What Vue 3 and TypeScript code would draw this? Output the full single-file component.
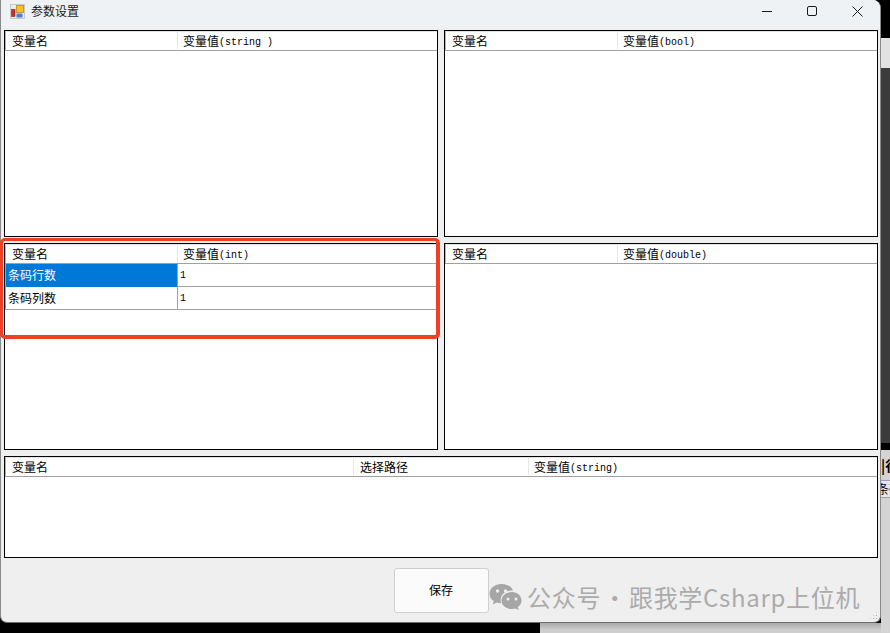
<script setup lang="ts">
interface Column {
  label: string
  suffix?: string
  width: string
}

interface Panel {
  key: string
  columns: Column[]
  rows: string[][]
  wide?: boolean
}

const name: Column = { label: '变量名', width: '172px' }
const value = (suffix: string): Column => ({ label: '变量值', suffix, width: '1fr' })

const panels: Panel[] = [
  { key: 'string', columns: [name, value('(string )')], rows: [] },
  { key: 'bool', columns: [name, value('(bool)')], rows: [] },
  { key: 'int', columns: [name, value('(int)')], rows: [['条码行数', '1'], ['条码列数', '1']] },
  { key: 'double', columns: [name, value('(double)')], rows: [] },
  {
    key: 'path',
    wide: true,
    columns: [
      { label: '变量名', width: '348px' },
      { label: '选择路径', width: '175px' },
      value('(string)')
    ],
    rows: []
  }
]

const template = (p: Panel) => p.columns.map((c) => c.width).join(' ')
</script>

<template>
  <div class="screen">
    <div class="window">
      <header class="titlebar">
        <svg class="app-icon" width="15" height="15" viewBox="0 0 15 15">
          <rect x="0.5" y="0.5" width="14" height="14" fill="#ececec" stroke="#c8c8c8" />
          <rect x="6.5" y="1.500" width="7" height="7" fill="#f6c02c" stroke="#b98a1a" stroke-width="0.8" />
          <rect x="1.500" y="5.500" width="3.500" height="7" fill="#c8302a" stroke="#8c1f1b" stroke-width="0.6" />
          <rect x="6.500" y="9.500" width="6" height="4" fill="#3f82d8" />
        </svg>
        <span class="title">参数设置</span>
        <div class="controls">
          <svg class="ctl-min" width="10" height="10" viewBox="0 0 10 10">
            <path d="M0 5.5H10" stroke="#1a1a1a" fill="none" />
          </svg>
          <svg class="ctl-max" width="10" height="10" viewBox="0 0 10 10">
            <rect x="0.5" y="0.5" width="9" height="9" rx="1.5" stroke="#1a1a1a" fill="none" />
          </svg>
          <svg class="ctl-close" width="11" height="11" viewBox="0 0 11 11">
            <path d="M0.5 0.5L10.5 10.5M10.5 0.5L0.5 10.5" stroke="#1a1a1a" fill="none" />
          </svg>
        </div>
      </header>

      <main class="panels">
        <section v-for="p in panels" :key="p.key" class="panel" :class="{ wide: p.wide }">
          <div class="head" :style="{ gridTemplateColumns: template(p) }">
            <div v-for="c in p.columns" :key="c.label" class="head-cell">{{ c.label }}<span v-if="c.suffix" class="mono">{{ c.suffix }}</span></div>
          </div>
          <div v-for="(r, i) in p.rows" :key="i" class="row" :style="{ gridTemplateColumns: template(p) }">
            <div class="cell first" :class="{ selected: i === 0 }">{{ r[0] }}</div>
            <div class="cell value">{{ r[1] }}</div>
          </div>
        </section>
      </main>

      <footer class="footer">
        <button class="save" type="button">保存</button>
      </footer>

      <div class="grip"></div>
    </div>

    <aside class="side">
      <div class="s-black"></div>
      <div class="s-light"></div>
      <div class="s-dark"></div>
      <div class="s-black2"></div>
      <div class="s-gray">
        <div class="s-text big">|行</div>
        <div class="s-text small">条码</div>
      </div>
    </aside>
    <div class="bottom">
      <div class="b-black"></div>
      <div class="b-gray"></div>
    </div>

    <div class="highlight"></div>

    <div class="watermark">
      <svg width="33" height="27" viewBox="0 0 33 27">
        <path d="M12.5 1C5.9 1 .5 5.3 .5 10.7c0 3 1.7 5.6 4.3 7.4l-1.1 3.5 4-2.1c1.4.4 2.9.6 4.4.7-.3-1-.5-2-.5-3 0-5.4 5-9.7 11.2-9.700.4 0 .8 0 1.200.1C22.900 3.700 18.100 1 12.500 1z" fill="#a6a6a6" />
        <circle cx="8.500" cy="8" r="1.700" fill="#efefef" />
        <circle cx="16.500" cy="8" r="1.700" fill="#efefef" />
        <path d="M23 9C17 9 12.500 12.800 12.500 17.500S17 26 23 26c1.200 0 2.400-.2 3.500-.5l3.200 1.500-.9-2.900c2.500-1.600 3.700-4 3.700-6.600C32.500 12.800 28.500 9 23 9z" fill="#a6a6a6" />
        <circle cx="19" cy="16" r="1.500" fill="#efefef" />
        <circle cx="27" cy="16" r="1.500" fill="#efefef" />
      </svg>
      <span class="wm-text">公众号 · 跟我学Csharp上位机</span>
    </div>
  </div>
</template>

<style scoped>
.screen {
  position: relative;
  width: 890px;
  height: 633px;
  overflow: hidden;
  display: grid;
  grid-template-columns: 881px 9px;
  grid-template-rows: 623px 10px;
  font-family: "Noto Sans CJK SC", "Liberation Sans", sans-serif;
  font-size: 12px;
  color: #000;
  background: #000;
}

.window {
  position: relative;
  grid-column: 1;
  grid-row: 1;
  display: flex;
  flex-direction: column;
  background: #efefef;
  border-left: 1px solid #8a8a8a;
  border-right: 1px solid #8a8a8a;
  border-bottom: 1px solid #6d6d6d;
  border-radius: 0 8px 7px 7px;
  box-sizing: border-box;
  overflow: hidden;
}

.titlebar {
  display: flex;
  align-items: center;
  height: 27px;
  flex: none;
  background: #eef2f5;
  padding-left: 9px;
  box-sizing: border-box;
}

.app-icon {
  flex: none;
  margin-top: -4px;
}

.title {
  margin-left: 6px;
  margin-top: -6px;
  line-height: 16px;
  color: #1a1a1a;
}

.controls {
  margin-left: auto;
  display: flex;
  align-items: center;
  padding-right: 17px;
  margin-top: -5px;
}

.ctl-min,
.ctl-max {
  margin-right: 35px;
}

.panels {
  display: grid;
  grid-template-columns: 434px 434px;
  grid-template-rows: 207px 207px 102px;
  gap: 6px;
  padding: 3px 0 0 3px;
  flex: none;
}

.panel {
  background: #fff;
  border: 1px solid #000;
  box-sizing: border-box;
  overflow: hidden;
}

.panel.wide {
  grid-column: 1 / span 2;
}

.head {
  display: grid;
  height: 20px;
  border-left: 1px solid #b4b4b4;
  border-bottom: 1px solid #a0a0a0;
  border-top: 1px solid #e4e4e4;
  box-sizing: border-box;
  background: #fff;
}

.head-cell {
  padding-left: 5px;
  height: 17px;
  line-height: 17px;
  font-size: 12px;
  border-right: 1px solid #e6e6e6;
  white-space: nowrap;
  box-sizing: border-box;
}

.head-cell:first-child {
  padding-left: 6px;
}

.head-cell:nth-child(2):not(:last-child) {
  padding-left: 6px;
}

.head-cell:last-child {
  border-right: none;
}

.mono {
  font-family: "Liberation Mono", monospace;
  font-size: 10px;
  vertical-align: 1px;
}

.row {
  display: grid;
  height: 23px;
  border-left: 1px solid #a0a0a0;
  border-bottom: 1px solid #a0a0a0;
  box-sizing: border-box;
}

.cell {
  line-height: 22px;
  white-space: nowrap;
  box-sizing: border-box;
}

.cell.first {
  padding-left: 2px;
  border-right: 1px solid #a0a0a0;
}

.cell.value {
  padding: 1px 0 0 2px;
  font-family: "Liberation Mono", monospace;
  font-size: 10px;
}

.cell.selected {
  background: #0078d7;
  color: #fff;
}

.footer {
  flex: 1;
  display: flex;
  justify-content: center;
  padding: 10px 0 0 1px;
}

.save {
  width: 95px;
  height: 45px;
  background: #fbfbfb;
  border: 1px solid #cfcfcf;
  border-radius: 3px;
  font-family: inherit;
  font-size: 12px;
  line-height: 16px;
  color: #000;
  padding: 0 0 2px;
}

.grip {
  position: absolute;
  right: 2px;
  bottom: 2px;
  width: 9px;
  height: 9px;
  background-image: radial-gradient(circle, #a8a8a8 1px, transparent 1px);
  background-size: 3px 3px;
  clip-path: polygon(100% 0, 100% 100%, 0 100%);
}

.side {
  grid-column: 2;
  grid-row: 1 / span 2;
  display: flex;
  flex-direction: column;
}

.s-black {
  height: 38px;
  background: #000;
}

.s-light {
  height: 30px;
  background: #e2e2e2;
}

.s-dark {
  height: 375px;
  background: #3c3c3c;
}

.s-black2 {
  height: 7px;
  background: #000;
}

.s-gray {
  flex: 1;
  background: #d4d4d4;
  overflow: hidden;
}

.s-text {
  white-space: nowrap;
  color: #000;
}

.s-text.big {
  font-size: 14px;
  font-weight: 700;
  line-height: 20px;
  margin-top: 5px;
}

.s-text.small {
  margin-top: 5px;
  font-size: 12px;
  line-height: 16px;
  margin-left: -4px;
  border-top: 1px solid #a0a0a0;
  border-bottom: 1px solid #a0a0a0;
  background: #e8e8e8;
}

.bottom {
  grid-column: 1;
  grid-row: 2;
  display: flex;
}

.b-black {
  width: 540px;
  background: #000;
}

.b-gray {
  flex: 1;
  background: linear-gradient(#a9a9a9, #cfcfcf 70%);
}

.highlight {
  position: absolute;
  left: 0;
  top: 238px;
  width: 440px;
  height: 101px;
  border: 3px solid #f04023;
  border-right-width: 4px;
  border-bottom-width: 4px;
  border-radius: 5px;
  box-sizing: border-box;
  pointer-events: none;
}

.watermark {
  position: absolute;
  left: 489px;
  top: 583px;
  display: flex;
  align-items: center;
  color: #ababab;
}

.wm-text {
  margin-left: 5px;
  font-family: "Noto Sans CJK SC", "Noto Sans", sans-serif;
  font-size: 24px;
  line-height: 27px;
  letter-spacing: 0.7px;
  word-spacing: -4.5px;
  white-space: nowrap;
}
</style>

<style>
html,
body {
  margin: 0;
  background: #000;
}
</style>
